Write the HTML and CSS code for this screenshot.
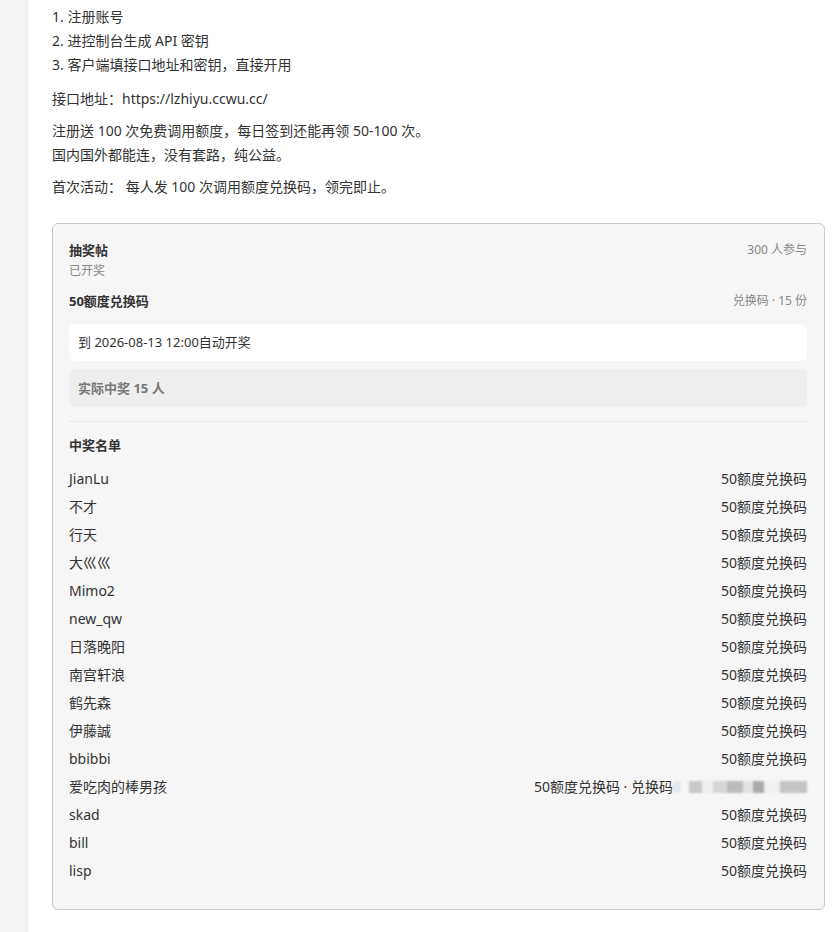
FILE: index.html
```html
<!DOCTYPE html>
<html lang="zh-CN">
<head>
    <meta charset="UTF-8">
    <meta name="viewport" content="width=device-width, initial-scale=1.0">
    <title>抽奖帖</title>
    <link rel="stylesheet" href="styles.css">
</head>
<body>
    <div class="page">
        <aside class="side"></aside>

        <main class="post">
            <ol class="steps">
                <li>注册账号</li>
                <li>进控制台生成 API 密钥</li>
                <li>客户端填接口地址和密钥，直接开用</li>
            </ol>
            <p>接口地址：https://lzhiyu.ccwu.cc/</p>
            <p>注册送 100 次免费调用额度，每日签到还能再领 50-100 次。<br>国内国外都能连，没有套路，纯公益。</p>
            <p>首次活动： 每人发 100 次调用额度兑换码，领完即止。</p>

            <div class="lottery">
                <div class="lottery-head">
                    <div>
                        <div class="lottery-title">抽奖帖</div>
                        <div class="lottery-status">已开奖</div>
                    </div>
                    <div class="muted">300 人参与</div>
                </div>

                <div class="prize-row">
                    <div class="prize-name">50额度兑换码</div>
                    <div class="muted">兑换码 · 15 份</div>
                </div>

                <div class="draw-time">到 2026-08-13 12:00自动开奖</div>
                <div class="draw-count">实际中奖 15 人</div>

                <div class="winners">
                    <div class="winners-title">中奖名单</div>
                    <ul class="winner-list" id="winnerList"></ul>
                </div>
            </div>
        </main>
    </div>

    <script>
        const winners = [
            'JianLu', '不才', '行天', '大巛巛', 'Mimo2', 'new_qw', '日落晚阳',
            '南宫轩浪', '鹤先森', '伊藤誠', 'bbibbi', '爱吃肉的棒男孩',
            'skad', 'bill', 'lisp'
        ];

        const list = document.getElementById('winnerList');

        winners.forEach((name) => {
            const li = document.createElement('li');
            let prize = '<span>50额度兑换码</span>';
            // this winner's code was shown, but it is pixelated out
            if (name === '爱吃肉的棒男孩') {
                prize = '<span>50额度兑换码 · 兑换码<span class="masked"></span></span>';
            }
            li.innerHTML = `<span>${name}</span>${prize}`;
            list.appendChild(li);
        });
    </script>
</body>
</html>
```

FILE: styles.css
```css
body {
    margin: 0;
    background-color: #fff;
    color: #333;
    font-family: "Noto Sans", "Noto Sans CJK SC", sans-serif;
    font-size: 14px;
}

.page {
    display: flex;
    min-height: 932px;
}

.side {
    width: 27px;
    flex-shrink: 0;
    background-color: #f4f4f4;
    border-right: 1px solid #ececec;
}

.post {
    flex: 1;
    padding: 5px 7px 20px 24px;
}

.steps {
    margin: 0 0 10px 0;
    padding: 0;
    list-style-position: inside;
    line-height: 24px;
}

p {
    margin: 0 0 8px 0;
    line-height: 24px;
}

.lottery {
    margin-top: 24px;
    padding: 16px 17px 24px 16px;
    background-color: #f6f6f6;
    border: 1px solid #c9c9c9;
    border-radius: 6px;
}

.lottery-head,
.prize-row {
    display: flex;
    justify-content: space-between;
    align-items: flex-start;
}

.lottery-title {
    font-size: 13px;
    font-weight: bold;
    line-height: 20px;
}

.lottery-status {
    margin-top: 2px;
    font-size: 12px;
    color: #888;
    line-height: 18px;
}

.muted {
    font-size: 12px;
    color: #888;
    line-height: 20px;
}

.prize-row {
    margin-top: 11px;
}

.prize-name {
    font-size: 13px;
    font-weight: bold;
    line-height: 20px;
}

.draw-time {
    margin-top: 13px;
    padding: 9px 9px;
    background-color: #fff;
    border-radius: 6px;
    font-size: 13px;
    line-height: 19px;
}

.draw-count {
    margin-top: 8px;
    padding: 10px 9px;
    background-color: #eeeeee;
    border-radius: 6px;
    color: #777;
    font-size: 13px;
    font-weight: bold;
    line-height: 18px;
}

.winners {
    margin-top: 14px;
    padding-top: 13px;
    border-top: 1px solid #e8e8e8;
}

.winners-title {
    font-size: 13px;
    font-weight: bold;
    line-height: 20px;
}

.winner-list {
    list-style: none;
    margin: 10px 0 0 0;
    padding: 0;
}

.winner-list li {
    display: flex;
    justify-content: space-between;
    line-height: 28px;
}

.masked {
    display: inline-block;
    width: 134px;
    height: 12px;
    vertical-align: -1px;
    background: linear-gradient(90deg,
        #e4e8ef 0 6%, #f6f6f6 6% 12%, #c9c9c9 12% 22%, #efefef 22% 30%,
        #d6d6d6 30% 40%, #bcbcbc 40% 52%, #e2e2e2 52% 60%, #aaaaaa 60% 68%,
        #f0f0f0 68% 80%, #c4c4c4 80% 100%);
    filter: blur(1px);
}
```
